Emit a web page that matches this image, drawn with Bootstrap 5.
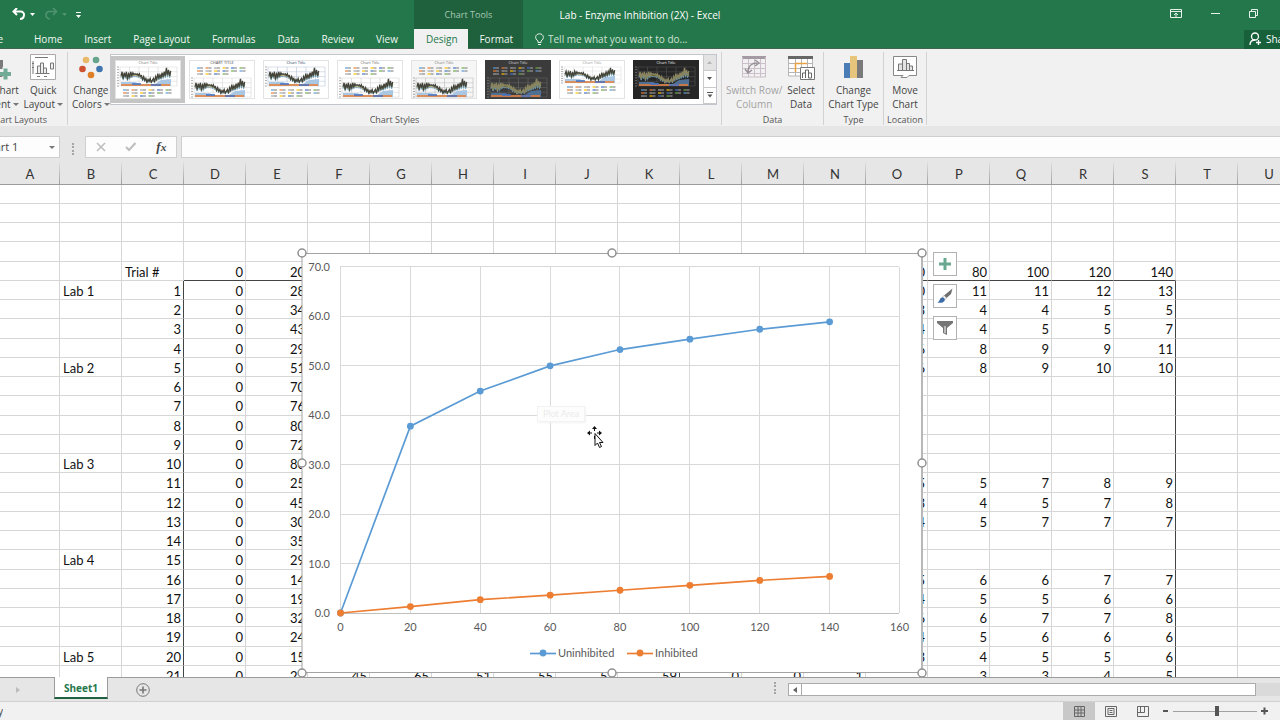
<!DOCTYPE html>
<html lang="en">
<head>
<meta charset="utf-8">
<meta name="viewport" content="width=device-width, initial-scale=1">
<title>Lab - Enzyme Inhibition (2X) - Excel</title>
<link href="https://cdn.jsdelivr.net/npm/bootstrap@5.3.0/dist/css/bootstrap.min.css" rel="stylesheet">
<style>
  body { font-family: "Open Sans", "Noto Sans", sans-serif; font-size: 10px; line-height: 14px; color: #444; background: #e6e6e6; }
  svg { display: block; flex: none; }
  button { font: inherit; color: inherit; background: none; border: 0; padding: 0; }

  /* title bar and tabs */
  .app-head { background: #24774a; color: #fff; border-bottom: 1px solid #3f6450; height: 49px; }
  .head-left { width: 414px; }
  .title-row { height: 29px; }
  .tab-row { height: 20px; }
  .tab-row a { color: #f2f8f4; text-decoration: none; padding: 3px 11px 0; height: 20px; line-height: 15px; white-space: nowrap; }
  .tab-row a.file-tab { width: 23px; padding-left: 0; padding-right: 20px; }
  .ctx { background: #1e613c; width: 109px; }
  .ctx .title-row { color: #a9c9b6; font-size: 9px; }
  .tab-row a.active { background: #f1f1f1; color: #24774a; }
  .ctx .tab-row a { flex: 1 1 auto; padding: 3px 8px 0 10px; text-align: center; }
  .doc-title { left: 0; right: 0; top: 8px; text-align: center; pointer-events: none; }
  .tell-me { color: #cfe3d6; background: none; border: 0; outline: 0; padding: 0; width: 160px; }
  .tell-me::placeholder { color: #cfe3d6; opacity: 1; }
  .share { background: #17603a; width: 36px; height: 19px; padding-left: 5px; white-space: nowrap; overflow: hidden; }
  .win-btns { gap: 29px; padding-right: 22px; }

  /* ribbon */
  .ribbon { background: #f1f1f1; height: 77px; }
  .r-group { border-right: 1px solid #d2d2d2; margin: 3px 0 1px; padding-top: 2px; }
  .r-group .group-name { font-size: 9px; line-height: 11px; color: #555; text-align: center; margin-top: auto; white-space: nowrap; }
  .r-btn { white-space: nowrap; text-align: center; line-height: 14px; }
  .r-btn svg { margin: 0 auto 3px; }
  .r-btn:disabled { color: #a3a3a3; }
  .caret { display: inline-block; border: 3px solid transparent; border-top-color: #777; border-bottom: 0; vertical-align: 2px; margin-left: 2px; }
  .g-layouts { width: 68px; }
  .g-styles { width: 654px; }
  .g-data { width: 102px; }
  .g-type { width: 60px; }
  .g-loc { width: 43px; }
  .gallery { background: #fff; border: 1px solid #c3c6cc; height: 51px; }
  .gallery > .thumb { border: 4px solid transparent; flex: 1 1 0; min-width: 0; height: 47px; margin-top: 1px; }
  .gallery > .thumb.active { border-color: #c5c5c5; }
  .thumb svg { width: 100%; height: 39px; }
  .g-scroll { width: 13px; }
  .g-scroll button { flex: 1; border: 1px solid #c9c9c9; border-width: 0 0 1px 1px; }
  .g-scroll button:disabled { background: #e3e3e3; }

  /* formula bar */
  .f-bar { height: 36px; padding-top: 10px; }
  .f-box { background: #fdfdfd; border: 1px solid #cfcfcf; height: 22px; }
  .name-box { width: 80px; margin-left: -20px; }
  .name-box input { border: 0; outline: 0; width: 60px; padding: 0; background: none; color: #444; font-size: 11px; }
  .f-tools { width: 92px; }
  .fx { font-family: "Liberation Serif", serif; font-size: 13px; }
  .f-input { outline: 0; border-right: 0; }
  .grip { width: 2px; height: 12px; border-left: 2px dotted #a5a5a5; }

  /* sheet */
  .sheet { background: #fff; border-bottom: 1px solid #9b9b9b; font-family: Lato, "Open Sans", sans-serif; font-size: 13px; }
  .cells { table-layout: fixed; width: 1300px; border-collapse: separate; border-spacing: 0; color: #111; line-height: 16px; }
  .cells col { width: 62px; }
  .cells col.first { width: 60px; }
  .cells th { height: 23px; padding: 2px 0 0; text-align: center; font-weight: 400; color: #333; border-bottom: 1px solid #9b9b9b; background: linear-gradient(#e0e0e0, #a0a0a0) right / 1px 100% no-repeat #e6e6e6; }
  .cells td { padding: 1px 2px 0; text-align: right; border-right: 1px solid #d6d6d6; border-bottom: 1px solid #d6d6d6; white-space: nowrap; }
  .cells td.txt { text-align: left; padding-left: 3px; }
  .cells tbody tr { height: 19px; }
  .cells tbody tr:nth-child(4n) { height: 20px; }
  .cells td.edge-r { border-right-color: #444; }
  .cells td.edge-b { border-bottom-color: #444; }

  /* floating chart */
  .chart-obj { left: 302px; top: 91px; width: 620px; height: 420px; }
  .chart-obj svg { overflow: visible; }
  .chart-tools { left: 631px; top: -1px; gap: 8px; }
  .chart-tools button { width: 24px; height: 24px; background: #fff; border: 1px solid #b2b2b2; }
  .pointer { left: 285px; top: 172px; }
  .plot-tip { left: 235px; top: 153px; padding: 0 5px; font-size: 9px; line-height: 14px; color: #ececec; background: #fdfdfd; border: 1px solid #f2f2f2; box-shadow: 1px 1px 2px #f3f3f3; }

  /* bottom bars */
  .tabs-bar { height: 24px; border-bottom: 1px solid #d0d0d0; }
  .nav-arrow { width: 54px; color: #bbb; padding-left: 16px; }
  .sheet-tab { width: 54px; height: 22px; margin-top: -1px; background: #fff; border: solid #9b9b9b; border-width: 0 1px; border-bottom: 2px solid #20623f; color: #24774a; font-weight: 700; text-decoration: none; text-align: center; line-height: 22px; position: relative; }
  .h-scroll { width: 492px; height: 13px; background: #dadada; margin-top: 5px; }
  .h-scroll .arrow { width: 14px; border: 1px solid #ababab; background: #fff; }
  .h-scroll .knob { width: 454px; border: 1px solid #ababab; border-left: 0; background: #fff; }
  .status { height: 18px; background: #f1f1f1; }
  .status-text { width: 3px; }
  .view-btn { width: 32px; height: 18px; }
  .view-btn.active { background: #c8c8c8; }
  .zoom-range { appearance: none; -webkit-appearance: none; width: 84px; height: 12px; margin: 0 4px; background: linear-gradient(#a0a0a0, #a0a0a0) center / 100% 1px no-repeat; }
  .zoom-range::-webkit-slider-thumb { -webkit-appearance: none; width: 4px; height: 10px; background: #555; border: 0; }
</style>
</head>
<body class="vh-100 d-flex flex-column overflow-hidden">

<header class="app-head d-flex position-relative flex-shrink-0">
  <div class="head-left flex-shrink-0">
    <div class="title-row d-flex align-items-center">
      <button aria-label="Undo" class="ms-2 ps-1 d-flex align-items-center gap-1">
        <svg width="14" height="14" viewBox="0 0 14 14" fill="none" stroke="#fff" stroke-width="2"><path d="M5 0 1.500 3.500 5 7M2 3.500h6.500c5 0 4.500 7-.5 7.500"/></svg>
        <svg width="6" height="4"><path d="M0 0h5L2.500 3z" fill="#fff"/></svg>
      </button>
      <button aria-label="Redo" class="ms-1 ps-1 d-flex align-items-center gap-1">
        <svg width="14" height="14" viewBox="0 0 14 14" fill="none" stroke="#4f9370" stroke-width="1.600"><path d="M9 0l3.500 3.500L9 7M12 3.500H5.500c-5 0-4.500 7 .5 7.500"/></svg>
        <svg width="6" height="4"><path d="M0 0h5L2.500 3z" fill="#4f9370"/></svg>
      </button>
      <button aria-label="Customize Quick Access Toolbar" class="ms-1 ps-1">
        <svg width="6" height="8"><path d="M0 1.500h5" stroke="#fff"/><path d="M0 4h5L2.500 7z" fill="#fff"/></svg>
      </button>
    </div>
    <nav class="tab-row d-flex" aria-label="Ribbon tabs">
      <a href="#" class="file-tab d-flex justify-content-end overflow-hidden">File</a><a href="#">Home</a><a href="#">Insert</a><a href="#">Page Layout</a><a href="#">Formulas</a><a href="#">Data</a><a href="#">Review</a><a href="#">View</a>
    </nav>
  </div>
  <div class="ctx flex-shrink-0">
    <div class="title-row d-flex align-items-center justify-content-center">Chart Tools</div>
    <nav class="tab-row d-flex" aria-label="Chart tabs"><a href="#" class="active">Design</a><a href="#">Format</a></nav>
  </div>
  <div class="flex-fill">
    <div class="title-row win-btns d-flex align-items-center justify-content-end">
      <button aria-label="Ribbon Display Options"><svg width="12" height="12" fill="none" stroke="#e8f2ec"><path d="M.5.500h11v8H.5zM.5 2.500h11M6 8V4M4 6l2-2 2 2"/></svg></button>
      <button aria-label="Minimize"><svg width="9" height="5"><path d="M0 1.500h9" stroke="#e8f2ec"/></svg></button>
      <button aria-label="Restore"><svg width="9" height="12" fill="none" stroke="#e8f2ec"><path d="M.5 2.500h6v6h-6zM2.500 2.500v-2h6v6h-2"/></svg></button>
    </div>
    <div class="tab-row d-flex align-items-center">
      <label class="d-flex align-items-center ps-2 ms-1 gap-1">
        <svg width="9" height="13" viewBox="0 0 9 13" fill="none" stroke="#e8f2ec"><path d="M3 9.500V8C-1 5.500.5.800 4.500.800S10 5.500 6 8v1.500zM3 11.500h3"/></svg>
        <input class="tell-me" type="text" aria-label="Tell me" placeholder="Tell me what you want to do...">
      </label>
      <button class="share ms-auto d-flex align-items-center gap-1">
        <svg width="13" height="14" viewBox="0 0 13 14" fill="none" stroke="#fff" stroke-width="1.300"><circle cx="6" cy="4.500" r="3.500"/><path d="M1 13c0-3 2-5 5-5M7 10.500h5M9.500 8v5"/></svg>Share
      </button>
    </div>
  </div>
  <div class="doc-title position-absolute">Lab - Enzyme Inhibition (2X) - Excel</div>
</header>

<section class="ribbon d-flex flex-shrink-0" aria-label="Chart design ribbon">
  <div class="r-group g-layouts d-flex flex-column overflow-hidden">
    <div class="d-flex justify-content-end">
      <button class="r-btn me-1">
        <svg width="48" height="26" viewBox="0 0 48 26"><path d="M24 6h7v17h-7z" fill="#7a7a7a"/><path d="M28 18h11M33.500 13v11" stroke="#f1f1f1" stroke-width="6"/><path d="M28 20h11M33.500 14.500v11" stroke="#72ab95" stroke-width="4"/></svg>
        Add Chart<br>Element<span class="caret"></span>
      </button>
      <button class="r-btn me-1">
        <svg width="26" height="26" viewBox="0 0 26 26" fill="none" stroke="#777"><path d="M.5.500h25v25H.5z" fill="#fff" stroke="#aaa"/><path d="M5 3.500h13M3 7v13M5.500 19.500h14M7 22.500h3M14 22.500h3M2 9.500h2M2 13.500h2"/><path d="M7.500 19v-7h3v7M10.500 19V9h3v10M13.500 19v-5h3v5M20.500 9h3v6h-3z" fill="#eee"/></svg>
        Quick<br>Layout<span class="caret"></span>
      </button>
    </div>
    <div class="group-name align-self-end me-3 pe-1">Chart Layouts</div>
  </div>

  <div class="r-group g-styles d-flex flex-column">
    <div class="d-flex">
      <button class="r-btn ms-1">
        <svg width="26" height="26" viewBox="0 0 26 26"><circle cx="8" cy="6" r="3.300" fill="#e9b96a"/><circle cx="18" cy="6" r="3.300" fill="#67a48c"/><circle cx="4.500" cy="15" r="3.300" fill="#cf5230"/><circle cx="21.500" cy="15" r="3.300" fill="#3f76b0"/><circle cx="13" cy="21" r="3.300" fill="#de7f26"/></svg>
        Change<br>Colors<span class="caret"></span>
      </button>
      <div class="gallery d-flex flex-fill me-1" id="gallery">
        <div class="g-scroll d-flex flex-column">
          <button aria-label="Scroll up" disabled class="d-flex align-items-center justify-content-center"><svg width="5" height="3"><path d="M0 3h5L2.500 0z" fill="#b5b5b5"/></svg></button>
          <button aria-label="Scroll down" class="d-flex align-items-center justify-content-center"><svg width="5" height="3"><path d="M0 0h5L2.500 3z" fill="#555"/></svg></button>
          <button aria-label="More styles" class="d-flex align-items-center justify-content-center"><svg width="6" height="6"><path d="M0 .5h6" stroke="#555"/><path d="M.5 2.500h5L3 5.500z" fill="#555"/></svg></button>
        </div>
      </div>
    </div>
    <div class="group-name">Chart Styles</div>
  </div>

  <div class="r-group g-data d-flex flex-column">
    <div class="d-flex justify-content-between ps-1 pe-2">
      <button class="r-btn" disabled>
        <svg width="26" height="26" viewBox="0 0 26 26" fill="none" stroke="#cbbfca"><path d="M1 3.500h24" stroke="#a39aa3" stroke-width="3"/><path d="M1.500 3v20h23V3M1.500 9.500h23M1.500 14.500h23M1.500 19.500h23M7.500 5v18M13.500 5v18M19.500 5v18" fill="none"/><path d="M7 18c0-6 4-9 9-9M14 6l4 3-4 3M4 15l3 4 4-3" stroke="#99919a" stroke-width="1.500"/></svg>
        Switch Row/<br>Column
      </button>
      <button class="r-btn">
        <svg width="28" height="26" viewBox="0 0 28 26" fill="none" stroke="#b5b5b5"><path d="M1.500 3v19h24V3z" fill="#fff"/><path d="M1 3.500h25" stroke="#666" stroke-width="3"/><path d="M1.500 9.500h24M1.500 14.500h24M1.500 18.500h24M8.500 5v17M14.500 5v17M20.500 5v17"/><path d="M20 9.500H8.500V18" stroke="#eba13d" stroke-width="1.500"/><path d="M13.500 13.500h14v12h-14z" fill="#fff" stroke="#777"/><path d="M15.500 24v-5h3v5M18.500 24v-8h3v8M21.500 24v-5h3v5z" stroke="#666"/></svg>
        Select<br>Data
      </button>
    </div>
    <div class="group-name">Data</div>
  </div>

  <div class="r-group g-type d-flex flex-column">
    <button class="r-btn">
      <svg width="20" height="26" viewBox="0 0 20 26"><path d="M0 9h6v15H0z" fill="#4a7db5"/><path d="M6 2h7v22H6z" fill="#e8c57c"/><path d="M13 6h6v18h-6z" fill="#7a7a7a"/></svg>
      Change<br>Chart Type
    </button>
    <div class="group-name">Type</div>
  </div>

  <div class="r-group g-loc d-flex flex-column">
    <button class="r-btn">
      <svg width="26" height="26" viewBox="0 0 26 26" fill="none" stroke="#888"><path d="M1.500 2.500h23v19H17l-2 2H9l2-2H1.500z" fill="#fff"/><path d="M6.500 16v-6h4v6M10.500 16V5.500h4V16M14.500 16V9.500h3V16M17.500 16v-4h3v4M5 16.500h17" fill="#e4e4e4" stroke="#777"/></svg>
      Move<br>Chart
    </button>
    <div class="group-name">Location</div>
  </div>
</section>

<section class="f-bar d-flex flex-shrink-0" aria-label="Formula bar">
  <div class="f-box name-box d-flex align-items-center flex-shrink-0">
    <input type="text" aria-label="Name box" value="Chart 1">
    <button aria-label="Open name list" class="ms-auto me-1"><span class="caret d-block m-0"></span></button>
  </div>
  <div class="d-flex justify-content-center align-items-center flex-shrink-0" style="width:25px"><div class="grip"></div></div>
  <div class="f-box f-tools d-flex align-items-center justify-content-around flex-shrink-0 me-1">
    <button aria-label="Cancel"><svg width="10" height="10" stroke="#bdbdbd" stroke-width="1.500"><path d="M1 1l8 8M9 1 1 9"/></svg></button>
    <button aria-label="Enter"><svg width="12" height="10" fill="none" stroke="#bdbdbd" stroke-width="2"><path d="M1 5l3 3 6.500-7"/></svg></button>
    <button aria-label="Insert function" class="fx fst-italic fw-bold">f<small>x</small></button>
  </div>
  <input type="text" aria-label="Formula" class="f-box f-input flex-fill">
</section>

<main class="sheet flex-fill position-relative overflow-hidden">
  <table class="cells" id="cells"></table>
  <div class="chart-obj position-absolute">
    <svg id="chart" width="620" height="420" viewBox="0 0 620 420" font-size="11" role="img" aria-label="Uninhibited and inhibited enzyme activity"></svg>
    <div class="plot-tip position-absolute">Plot Area</div>
    <svg class="pointer position-absolute" width="18" height="24" viewBox="0 0 18 24"><path d="M1 8h13M7.500 2v12" stroke="#111" stroke-dasharray="4 5"/><path d="M0 8l3-2.500v5zM15 8l-3-2.500v5zM7.500 1L5 4h5z" fill="#111"/><path d="M8 8.500v12l2.500-2.500 2 4.500 2-1-2-4h3.500z" fill="#fff" stroke="#111"/></svg>
    <div class="chart-tools position-absolute d-flex flex-column">
      <button aria-label="Chart elements" class="d-flex align-items-center justify-content-center"><svg width="12" height="12"><path d="M0 6h12M6 0v12" stroke="#6aa790" stroke-width="3"/></svg></button>
      <button aria-label="Chart styles" class="d-flex align-items-center justify-content-center"><svg width="16" height="16" viewBox="0 0 16 16"><path d="M15.500.500L14 6 9.500 10 7 7.500z" fill="#6f6f6f"/><path d="M7 7.500L9.500 10 8 11.500 5.500 9z" fill="#fff" stroke="#888" stroke-width=".6"/><path d="M5 9.500c2 0 3.500 1.500 2.500 3.500C6 15 3 15 .5 14.500 3 13.500 2.500 10 5 9.500z" fill="#3d6ca8"/></svg></button>
      <button aria-label="Chart filters" class="d-flex align-items-center justify-content-center"><svg width="16" height="14" viewBox="0 0 16 14"><path d="M0 0h16v2l-6 5v7l-4-2V7L0 2z" fill="#757575"/><path d="M8 5v7" stroke="#fff"/></svg></button>
    </div>
  </div>
</main>

<footer class="flex-shrink-0">
  <div class="tabs-bar d-flex">
    <button class="nav-arrow d-flex align-items-center flex-shrink-0" aria-label="Next sheet"><svg width="4" height="6"><path d="M0 0v6l4-3z" fill="#bbb"/></svg></button>
    <a href="#" class="sheet-tab">Sheet1</a>
    <button aria-label="New sheet" class="ms-4 ps-1"><svg width="14" height="14" fill="none" stroke="#777"><circle cx="7" cy="7" r="6.300"/><path d="M3.500 7h7M7 3.500v7" stroke-width="1.600"/></svg></button>
    <div class="grip mt-1 ms-auto me-2 pe-1"></div>
    <div class="h-scroll d-flex">
      <button class="arrow d-flex align-items-center justify-content-center" aria-label="Scroll left"><svg width="4" height="6"><path d="M4 0v6L0 3z" fill="#666"/></svg></button>
      <div class="knob"></div>
    </div>
  </div>
  <div class="status d-flex align-items-center">
    <div class="status-text overflow-hidden d-flex justify-content-end">Ready</div>
    <button class="view-btn active ms-auto d-flex align-items-center justify-content-center" aria-label="Normal view"><svg width="11" height="11" fill="none" stroke="#666"><path d="M.5.500h10v10H.5zM.5 4h10M.5 7h10M4 .5v10M7 .5v10"/></svg></button>
    <button class="view-btn d-flex align-items-center justify-content-center" aria-label="Page layout view"><svg width="12" height="11" fill="none" stroke="#666"><path d="M.5.500h11v10H.5zM3 2.500h6v6H3zM4.500 4.500h3M4.500 6.500h3"/></svg></button>
    <button class="view-btn d-flex align-items-center justify-content-center" aria-label="Page break view"><svg width="12" height="11" fill="none" stroke="#666"><path d="M.5.500h11v10H.5zM.5 6.500h7v-6M3.500.500v6"/></svg></button>
    <button aria-label="Zoom out" class="ms-1"><svg width="6" height="8"><path d="M0 4h5" stroke="#555" stroke-width="2"/></svg></button>
    <input type="range" class="zoom-range" aria-label="Zoom" min="0" max="100" value="52">
    <button aria-label="Zoom in" class="me-2 pe-1"><svg width="7" height="8"><path d="M0 4h7M3.500.500v7" stroke="#555" stroke-width="2"/></svg></button>
  </div>
</footer>

<script src="https://cdn.jsdelivr.net/npm/bootstrap@5.3.0/dist/js/bootstrap.bundle.min.js"></script>
<script>
const letters = 'ABCDEFGHIJKLMNOPQRSTU'.split('');
const columnE = [28,34,43,29,51,70,76,80,72,80,25,45,30,35,29,14,19,32,24,15,23];
// O to S values, keyed by trial number
const tail = {1:[10,11,11,12,13],2:[3,4,4,5,5],3:[4,4,5,5,7],4:[6,8,9,9,11],5:[6,8,9,10,10],
  11:[5,5,7,8,9],12:[3,4,5,7,8],13:[4,5,7,7,7],16:[5,6,6,7,7],17:[4,5,5,6,6],18:[6,6,7,7,8],
  19:[4,5,6,6,6],20:[3,4,5,5,6],21:[2,3,3,4,5]};
const labs = {1:1, 5:2, 10:3, 15:4, 20:5};
let html = '<colgroup>' + letters.map((l, i) => `<col${i ? '' : ' class="first"'}>`).join('') + '</colgroup><thead><tr>' +
  letters.map(l => `<th scope="col">${l}</th>`).join('') + '</tr></thead><tbody>';
for (let r = 1; r <= 26; r++) {
  const row = {}, t = r - 5;
  if (r === 5) Object.assign(row, {C:'Trial #', D:0, E:20, O:60, P:80, Q:100, R:120, S:140});
  if (t > 0) {
    if (labs[t]) row.B = 'Lab ' + labs[t];
    row.C = t; row.D = 0; row.E = columnE[t - 1];
    (tail[t] || []).forEach((v, i) => row['OPQRS'[i]] = v);
    if (t === 21) Object.assign(row, {F:45, G:65, H:51, I:55, J:51, K:59, L:0, M:0, N:1});
  }
  html += '<tr>' + letters.map((l, i) => {
    const c = [];
    if (typeof row[l] === 'string') c.push('txt');
    if (t > 0 && 'CKS'.includes(l)) c.push('edge-r');
    if (r === 5 && i > 2 && i < 19) c.push('edge-b');
    return `<td${c.length ? ` class="${c.join(' ')}"` : ''}>${row[l] ?? ''}</td>`;
  }).join('') + '</tr>';
}
document.getElementById('cells').innerHTML = html + '</tbody>';

// scatter chart
const X = v => 38.5 + v * 3.4937, Y = v => 360 - v * 4.943;
let s = '<rect x="0" y="0.5" width="620" height="419" fill="#fff" stroke="#a3a3a3"/><path d="M620 0v420" stroke="#b8b8b8" stroke-width="2"/>';
for (let v = 0; v <= 160; v += 20) s += `<path d="M${Math.floor(X(v)) + .5} 14V360" stroke="#d9d9d9"/><text x="${X(v)}" y="378" text-anchor="middle" fill="#595959">${v}</text>`;
for (let v = 0; v <= 70; v += 10) s += `<path d="M38 ${Math.floor(Y(v)) + .5}H597" stroke="${v ? '#d9d9d9' : '#bfbfbf'}"/><text x="28" y="${Y(v) + 4}" text-anchor="end" fill="#595959">${v.toFixed(1)}</text>`;
const series = [['Uninhibited','#5b9bd5',[0,37.8,44.9,50,53.3,55.4,57.4,58.9],228],['Inhibited','#ed7d31',[0,1.3,2.7,3.6,4.6,5.6,6.6,7.4],325]];
for (const [name, colour, ys, lx] of series) {
  s += `<polyline points="${ys.map((y, i) => X(i * 20) + ',' + Y(y)).join(' ')}" fill="none" stroke="${colour}" stroke-width="1.700"/>`;
  s += ys.map((y, i) => `<circle cx="${X(i * 20)}" cy="${Y(y)}" r="3.400" fill="${colour}"/>`).join('');
  s += `<path d="M${lx} 400.500h26" stroke="${colour}" stroke-width="1.700"/><circle cx="${lx + 13}" cy="400" r="3.400" fill="${colour}"/><text x="${lx + 28}" y="404" fill="#595959">${name}</text>`;
}
for (const [x, y] of [[0,0],[310,0],[620,0],[0,210],[620,210],[0,420],[310,420],[620,420]]) s += `<circle cx="${x}" cy="${y}" r="4" fill="#fff" stroke="#919191" stroke-width="1.500"/>`;
document.getElementById('chart').innerHTML = s;

// chart style thumbnails: [background, title colour, legend on top, grid colour]
const styles = [['#fff','#777',0,'#d5d5d5'],['#fff','#444',1,'#d5d5d5'],['#fff','#223a63',0,'#b5c3d6'],['#fff','#666',1,'#ccc'],
  ['#f6f6f6','#777',1,'#bbb'],['#3b3b3b','#ddd',1,'#666'],['#fff','#999',0,'#ddd'],['#262626','#eee',0,'#555']];
const palette = ['#5b9bd5','#ed7d31','#a5a5a5','#ffc000','#4472c4','#70ad47'];
const shape = [8,4,11,5,9,4,12,5,10,4,8,5,7,6,7,6,8,6,9,8,12,9,13,11,15,12,14,11,15,13,11,15,9,12,6,11,7,10,5,9,4,8,0,7,2,8,3];
document.getElementById('gallery').insertAdjacentHTML('afterbegin', styles.map(([bg, ink, top, grid], n) => {
  const y0 = top ? 18 : 7, h = n === 6 ? 16 : 19, dark = n === 5 || n === 7;
  let g = `<rect x=".5" y=".5" width="65" height="38" fill="${bg}" stroke="${dark ? bg : '#e3e3e3'}"/><text x="33" y="4.500" font-size="4" text-anchor="middle" fill="${ink}">${n === 1 ? 'CHART TITLE' : 'Chart Title'}</text>`;
  for (let i = 0; i < 5; i++) g += `<path d="M5 ${y0 + i * h / 4}h57" stroke="${grid}" stroke-width=".5"/>`;
  for (let i = 0; i < 7; i++) g += `<path d="M${5 + i * 9.5} ${y0}v${h}" stroke="${grid}" stroke-width=".6"/>`;
  for (let i = 0; i < 8; i++) g += `<path d="M2 ${y0 + i * h / 7}h2" stroke="#888" stroke-width=".7"/>`;
  const line = (dy, k, c, w) => `<polyline fill="none" stroke="${c}" stroke-width="${w}" points="${shape.map((v, i) => (6 + i * 1.08) + ',' + (y0 + (v * k + dy) * h / 20)).join(' ')}"/>`;
  g += `<path d="M6 ${y0 + h - 4}h14l6 2 14 0 6-4 10-1v7H6z" fill="${dark ? '#4f6f95' : '#a9c6e3'}"/>`;
  g += `<path d="M6 ${y0 + h - 1}h49" stroke="#ed7d31" stroke-width="1.700"/><path d="M17 ${y0 + h - 2}h9M36 ${y0 + h - 1}h10" stroke="#4472c4" stroke-width="1.500"/>`;
  g += line(4, .85, '#d9a520', .7) + line(5, .8, '#5b9bd5', .7) + line(2.5, .9, dark ? '#77844f' : '#6a7552', .8) + line(1, 1, dark ? '#8a8560' : '#43433a', 1.2);
  const ly = top ? 8 : y0 + h + 4;
  for (let r = 0; r < 3; r++) for (let i = 0; i < (r === 2 ? 4 : 6); i++) g += `<path d="M${8 + i * 8.5} ${ly + r * 3}h3" stroke="${palette[(i + r) % 6]}" stroke-width="1.200"/><path d="M${11 + i * 8.5} ${ly + r * 3}h3" stroke="${dark ? '#aaa' : '#777'}" stroke-width="1"/>`;
  return `<button class="thumb${n ? '' : ' active'}" aria-label="Style ${n + 1}"><svg viewBox="0 0 66 39" preserveAspectRatio="none">${g}</svg></button>`;
}).join(''));
</script>
</body>
</html>
